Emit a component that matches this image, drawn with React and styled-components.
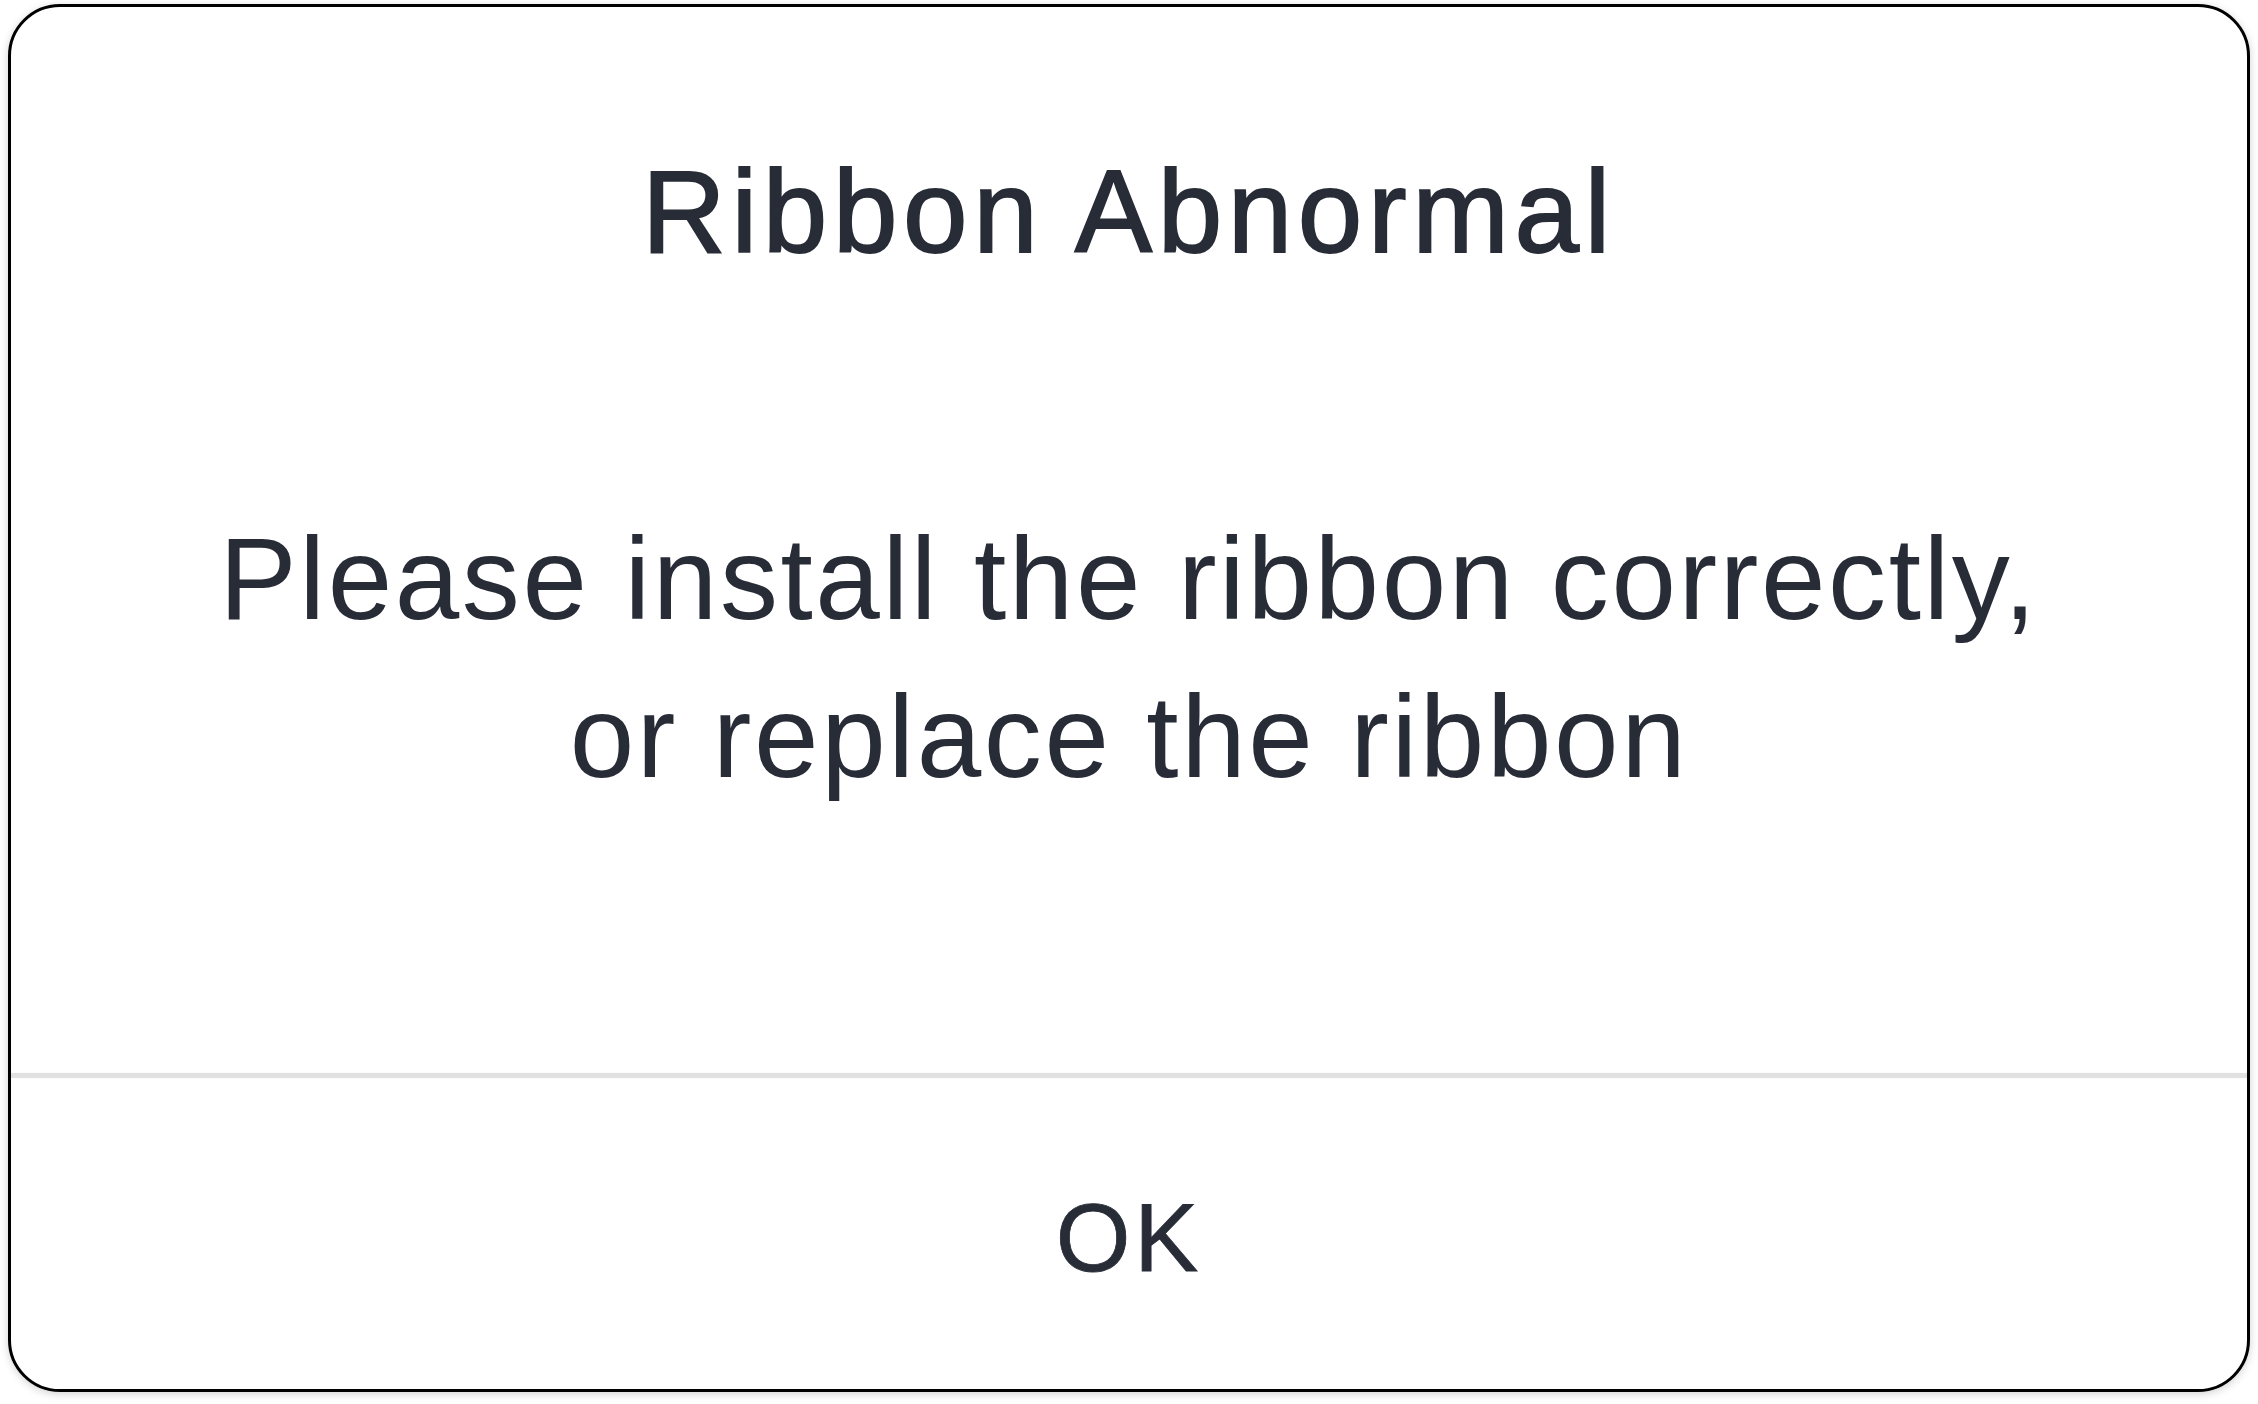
import React from "react";
import styled, { createGlobalStyle } from "styled-components";

const GlobalStyle = createGlobalStyle`
  html, body {
    margin: 0;
    padding: 0;
    background: #ffffff;
  }
  body {
    font-family: "Liberation Sans", Arial, sans-serif;
  }
`;

const Page = styled.div`
  height: 100vh;
  box-sizing: border-box;
  padding: 4px 8px 12px 8px;
  display: flex;
`;

const Dialog = styled.div`
  flex: 1;
  display: flex;
  flex-direction: column;
  background: #ffffff;
  border: 3px solid #000000;
  border-radius: 52px;
  box-shadow: 0 2px 8px rgba(0, 0, 0, 0.18);
  overflow: hidden;
  color: #272c37;
`;

const Content = styled.div`
  flex: 1;
  display: flex;
  flex-direction: column;
  align-items: center;
  padding-top: 136px;
`;

const Title = styled.h1`
  margin: 0;
  font-size: 116px;
  line-height: 139px;
  font-weight: 400;
  letter-spacing: 5.6px;
  -webkit-text-stroke: 1.8px #272c37;
`;

const Message = styled.p`
  margin: 218px 0 0;
  font-size: 116px;
  line-height: 158px;
  letter-spacing: 2.6px;
  text-align: center;
`;

const Divider = styled.div`
  height: 5px;
  background: #e1e1e1;
  box-shadow: 0 0 1px #eeeeee;
`;

const Footer = styled.div`
  height: 311px;
  display: flex;
  align-items: center;
  justify-content: center;
  padding-top: 8px;
  box-sizing: border-box;
`;

const OkButton = styled.button`
  border: none;
  background: none;
  padding: 0;
  font-family: inherit;
  font-size: 96px;
  line-height: 1;
  color: #272c37;
  letter-spacing: 4px;
  -webkit-text-stroke: 0.8px #272c37;
  cursor: pointer;
`;

const App = () => {
  return (
    <>
      <GlobalStyle />
      <Page>
        <Dialog>
          <Content>
            <Title>Ribbon Abnormal</Title>
            <Message>
              Please install the ribbon correctly,
              <br />
              or replace the ribbon
            </Message>
          </Content>
          <Divider />
          <Footer>
            <OkButton>OK</OkButton>
          </Footer>
        </Dialog>
      </Page>
    </>
  );
};

export default App;
